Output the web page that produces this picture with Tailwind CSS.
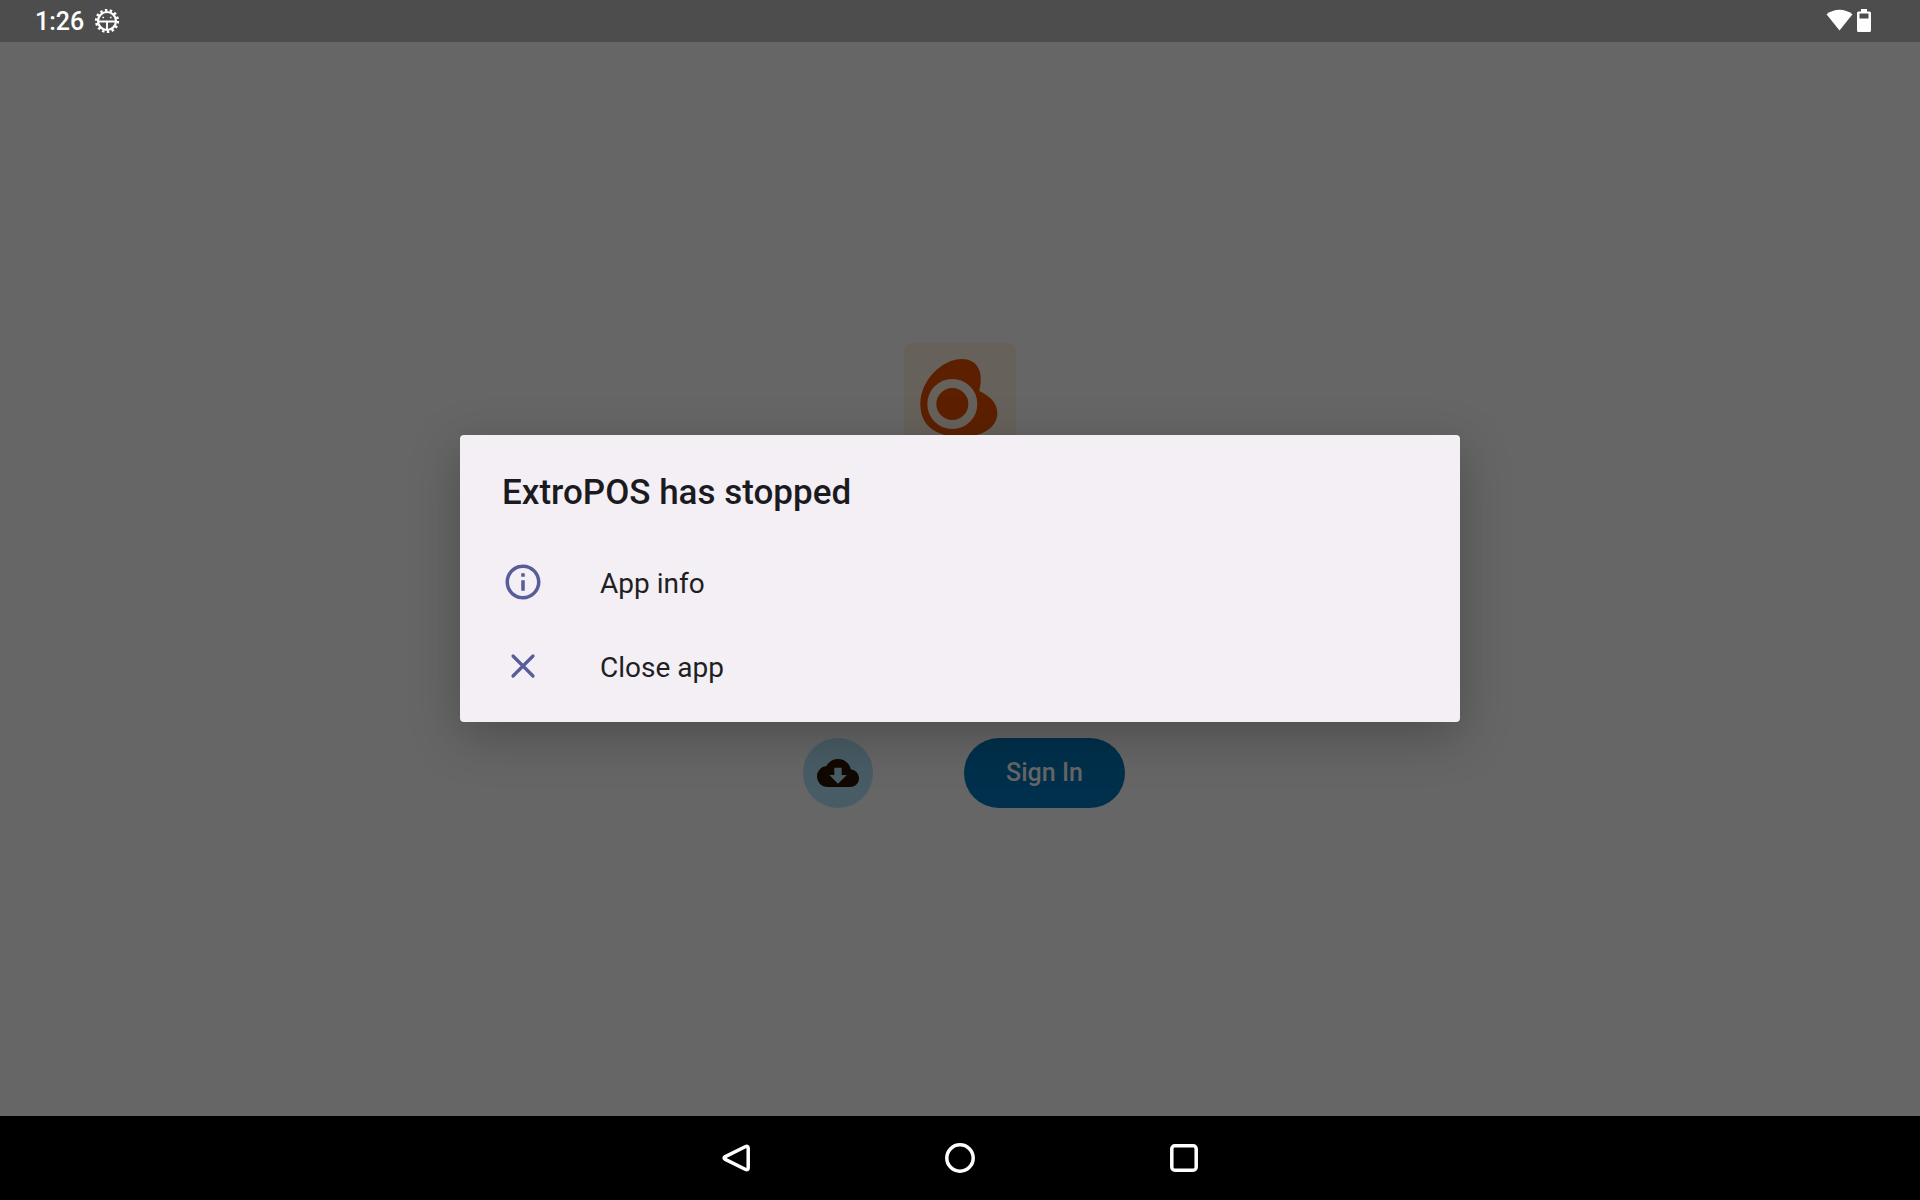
<!DOCTYPE html>
<html lang="en">
<head>
<meta charset="utf-8">
<meta name="viewport" content="width=device-width, initial-scale=1">
<title>ExtroPOS</title>
<script src="https://cdn.jsdelivr.net/npm/@tailwindcss/browser@4"></script>
</head>
<body class="flex min-h-screen flex-col bg-[#666666] font-['Roboto',sans-serif]">
  <header class="flex h-[42px] items-center justify-between bg-[#4d4d4d] pr-[49px] pl-[35px] text-white">
    <div class="flex items-center gap-2.5">
      <time class="pt-0.5 text-[25px] leading-8 font-medium">1:26</time>
      <svg class="size-[26px]" viewBox="0 0 26 26" fill="none" stroke="currentColor" aria-hidden="true">
        <circle cx="13" cy="13" r="9" stroke-width="2.200"/>
        <circle cx="13" cy="13" r="10.800" stroke-width="2.600" stroke-dasharray="2.450 2.397"/>
        <path d="M4 13.500h18M13 14v8" stroke-width="1.900"/>
        <path d="M8.500 9.500H10M16 9.500h1.500" stroke-width="1.500"/>
      </svg>
    </div>
    <div class="flex items-center gap-1 pb-0.5">
      <svg class="h-6 w-[27px]" viewBox="0 0 27 24" fill="currentColor" aria-hidden="true"><path d="M.5 6.300C8 .2 19 .2 26.500 6.300L13.500 22.500z"/></svg>
      <svg class="h-6 w-3.5" viewBox="0 0 14 24" fill="currentColor" fill-rule="evenodd" aria-hidden="true"><path d="M4 1h6v2.500h2.500Q14 3.500 14 5v17.500q0 1.500-1.500 1.500h-11Q0 24 0 22.500V5q0-1.500 1.500-1.500H4zM2.500 5.500v5h9v-5z"/></svg>
    </div>
  </header>

  <main class="relative flex flex-1 flex-col">
    <div class="flex flex-1 flex-col items-center justify-center pb-2">
      <svg class="size-28 rounded-lg bg-[#66615a]" viewBox="42 39 336 336" role="img" aria-label="ExtroPOS logo">
        <path fill="#5c2000" d="M91 222C91 150 158 87 215 87C262 87 276 125 272 157C271 167 269 175 268 183C295 196 322 215 322 250C322 290 280 322 210 322C140 318 91 290 91 222Z"/>
        <circle cx="187" cy="222" r="61.500" fill="none" stroke="#66615a" stroke-width="27"/>
      </svg>
      <div class="mt-[283px] flex items-center gap-[91px] pl-2">
        <button type="button" aria-label="Download" class="flex size-[70px] items-center justify-center rounded-full bg-[#485c65] text-[#120802]">
          <svg class="size-[42px]" viewBox="0 0 24 24" fill="currentColor" aria-hidden="true"><path d="M19.350 10.040C18.670 6.590 15.640 4 12 4 9.110 4 6.600 5.640 5.350 8.040 2.340 8.360 0 10.910 0 14c0 3.310 2.690 6 6 6h13c2.760 0 5-2.240 5-5 0-2.640-2.050-4.780-4.650-4.960zM17 13.200l-5 5-5-5h2.900V9h4.200v4.200z"/></svg>
        </button>
        <button type="button" class="h-[70px] rounded-full bg-[#01304c] px-[42px] text-[25px] font-medium text-[#666666]">Sign In</button>
      </div>
    </div>

    <div class="absolute inset-0 flex items-center justify-center pb-0.5">
      <section role="dialog" aria-labelledby="dialog-title" class="w-[1000px] max-w-[90%] rounded-sm bg-[#f3eff5] pt-[34px] pb-3.5 shadow-[0_14px_50px_rgba(0,0,0,0.25)]">
        <h1 id="dialog-title" class="px-[42px] pb-[23px] text-[35px] leading-[48px] font-medium text-[#1b1b1f]">ExtroPOS has stopped</h1>
        <button type="button" class="flex h-[84px] w-full items-center gap-14 px-[42px] text-[28px] text-[#1f1f1f]">
          <svg class="size-[42px] text-[#585c98]" viewBox="0 0 24 24" fill="currentColor" aria-hidden="true"><path d="M11 7h2v2h-2zm0 4h2v6h-2zm1-9C6.480 2 2 6.480 2 12s4.480 10 10 10 10-4.480 10-10S17.520 2 12 2zm0 18c-4.410 0-8-3.590-8-8s3.590-8 8-8 8 3.590 8 8-3.590 8-8 8z"/></svg>
          <span class="pt-1">App info</span>
        </button>
        <button type="button" class="flex h-[84px] w-full items-center gap-14 px-[42px] text-[28px] text-[#1f1f1f]">
          <svg class="size-[42px] text-[#585c98]" viewBox="0 0 42 42" fill="none" stroke="currentColor" stroke-width="3.200" stroke-linecap="round" aria-hidden="true"><path d="M11 11l20 20M31 11L11 31"/></svg>
          <span class="pt-1">Close app</span>
        </button>
      </section>
    </div>
  </main>

  <nav class="flex h-[84px] items-center justify-center gap-[140px] bg-black text-white" aria-label="System navigation">
    <button type="button" aria-label="Back" class="flex size-[84px] items-center justify-center">
      <svg class="size-[30px]" viewBox="0 0 30 30" fill="none" stroke="currentColor" stroke-width="3.500" stroke-linejoin="round" aria-hidden="true"><path d="M24.700 3.500L4.300 13.600Q1.800 15 4.300 16.400L24.700 26.500Q27.200 27.500 27.200 24.500V5.500Q27.200 2.500 24.700 3.500z"/></svg>
    </button>
    <button type="button" aria-label="Home" class="flex size-[84px] items-center justify-center">
      <svg class="size-[30px]" viewBox="0 0 30 30" fill="none" stroke="currentColor" stroke-width="3.500" aria-hidden="true"><circle cx="15" cy="15" r="13.200"/></svg>
    </button>
    <button type="button" aria-label="Recent apps" class="flex size-[84px] items-center justify-center">
      <svg class="size-[30px]" viewBox="0 0 30 30" fill="none" stroke="currentColor" stroke-width="3.500" aria-hidden="true"><rect x="2.800" y="2.800" width="24.400" height="24.400" rx="3"/></svg>
    </button>
  </nav>
</body>
</html>
